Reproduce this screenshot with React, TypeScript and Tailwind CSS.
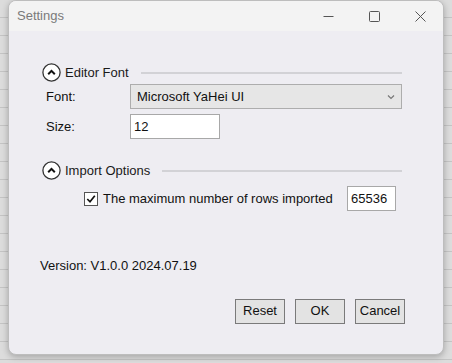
import React from 'react';

function CollapseIcon() {
  return (
    <svg width="19" height="19" viewBox="0 0 19 19" className="shrink-0">
      <circle cx="9.5" cy="9.5" r="8.6" fill="#fff" stroke="#333" strokeWidth="1.3" />
      <path d="M6.2 11.2 L9.5 7.9 L12.8 11.2" fill="none" stroke="#111" strokeWidth="2" />
    </svg>
  );
}

function Section({ title, children }: { title: string; children: React.ReactNode }) {
  return (
    <div>
      <div className="flex items-center h-[19px]">
        <CollapseIcon />
        <span className="ml-[4px] text-[13px] text-[#1a1a1a] whitespace-nowrap">{title}</span>
        <div className="flex-1 ml-[12px] h-[2px] bg-[#d2d2d6]" />
      </div>
      {children}
    </div>
  );
}

function Button({ label }: { label: string }) {
  return (
    <button className="w-[50px] h-[25px] border border-[#7a7a7a] bg-[#e3e3e3] text-[13px] text-[#111]">
      {label}
    </button>
  );
}

export default function App() {
  return (
    <div
      className="w-[452px] h-[363px] overflow-hidden bg-[#dcdcdc] bg-[repeating-linear-gradient(to_bottom,transparent_0,transparent_17px,#c4c4c4_17px,#c4c4c4_18px)] pl-[8px]"
      style={{ fontFamily: '"Liberation Sans", Arial, sans-serif' }}
    >
      <div className="w-[436px] h-[355px] flex flex-col rounded-[8px] border border-[#bdbdbd] bg-[#eeedf2] shadow-[0_2px_6px_rgba(0,0,0,0.25)] overflow-hidden">
        <div className="h-[30px] shrink-0 bg-[#f3f3f3] flex items-center pl-[8px]">
          <span className="text-[13px] text-[#7a7a7a]">Settings</span>
          <div className="ml-auto flex items-center h-full">
            <div className="w-[46px] flex justify-center">
              <svg width="11" height="11" viewBox="0 0 11 11"><path d="M0.5 5.5 H10.5" stroke="#555" strokeWidth="1" /></svg>
            </div>
            <div className="w-[46px] flex justify-center">
              <svg width="11" height="11" viewBox="0 0 11 11"><rect x="0.5" y="0.5" width="10" height="10" rx="1" fill="none" stroke="#555" strokeWidth="1" /></svg>
            </div>
            <div className="w-[46px] flex justify-center">
              <svg width="11" height="11" viewBox="0 0 11 11"><path d="M0.5 0.5 L10.5 10.5 M10.5 0.5 L0.5 10.5" stroke="#555" strokeWidth="1" /></svg>
            </div>
          </div>
        </div>

        <div className="flex-1 flex flex-col pl-[33px] pr-[41px] pt-[32px]">
          <Section title="Editor Font">
            <div className="flex items-center mt-[2px] h-[25px]">
              <span className="w-[88px] pl-[4px] text-[13px] text-[#111]">Font:</span>
              <div className="flex-1 h-[25px] border border-[#adadad] bg-[#e6e6e6] flex items-center pl-[6px] pr-[6px]">
                <span className="text-[13px] text-[#111]">Microsoft YaHei UI</span>
                <svg className="ml-auto" width="8" height="6" viewBox="0 0 8 6"><path d="M1 1.5 L4 4.5 L7 1.5" fill="none" stroke="#777" strokeWidth="1.2" /></svg>
              </div>
            </div>
            <div className="flex items-center mt-[5px] h-[25px]">
              <span className="w-[88px] pl-[4px] text-[13px] text-[#111]">Size:</span>
              <div className="w-[90px] h-[25px] border border-[#a8a8a8] bg-white flex items-center pl-[3px]">
                <span className="text-[13px] text-[#111]">12</span>
              </div>
            </div>
          </Section>

          <div className="mt-[22px]">
            <Section title="Import Options">
              <div className="flex items-center mt-[6px] h-[25px] pl-[42px]">
                <div className="w-[14px] h-[14px] shrink-0 border border-[#555] bg-white flex items-center justify-center">
                  <svg width="10" height="10" viewBox="0 0 10 10"><path d="M1.3 5 L4 7.8 L8.8 1.8" fill="none" stroke="#111" strokeWidth="1.7" /></svg>
                </div>
                <span className="ml-[5px] text-[13px] text-[#111] whitespace-nowrap">The maximum number of rows imported</span>
                <div className="ml-auto mr-[6px] w-[49px] h-[25px] shrink-0 border border-[#a8a8a8] bg-white flex items-center pl-[3px]">
                  <span className="text-[13px] text-[#111]">65536</span>
                </div>
              </div>
            </Section>
          </div>

          <div className="mt-[45px] -ml-[2px] text-[13px] text-[#111]">Version: V1.0.0 2024.07.19</div>

          <div className="mt-[23px] -mr-[3px] flex justify-end gap-[10px]">
            <Button label="Reset" />
            <Button label="OK" />
            <Button label="Cancel" />
          </div>
        </div>
      </div>
    </div>
  );
}
